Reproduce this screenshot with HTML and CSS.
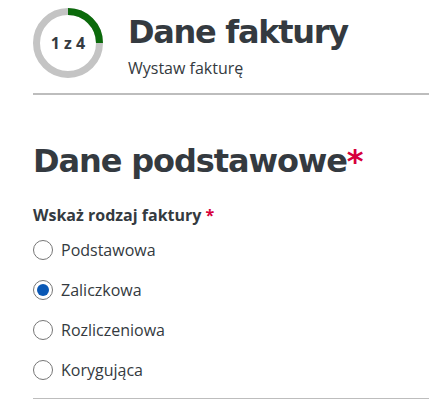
FILE: index.html
```html
<!DOCTYPE html>
<html lang="pl">
<head>
<meta charset="utf-8">
<link rel="stylesheet" href="styles.css">
</head>
<body>
<div class="page">
  <header class="head">
    <div class="ring">
      <svg width="70" height="70" viewBox="0 0 70 70">
        <circle cx="35" cy="35" r="31.5" fill="none" stroke="#c4c4c4" stroke-width="7"/>
        <path d="M35 3.5 A31.5 31.5 0 0 1 66.5 35" fill="none" stroke="#0b6a0b" stroke-width="7"/>
      </svg>
      <span class="ring-text">1 z 4</span>
    </div>
    <div class="titles">
      <h1 class="title">Dane faktury</h1>
      <p class="subtitle">Wystaw fakturę</p>
    </div>
  </header>
  <hr class="sep">
  <h2 class="section">Dane podstawowe<span class="req">*</span></h2>
  <div class="group" role="radiogroup">
    <div class="legend">Wskaż rodzaj faktury <span class="req">*</span></div>
    <label class="opt"><span class="radio"></span>Podstawowa</label>
    <label class="opt"><span class="radio checked"></span>Zaliczkowa</label>
    <label class="opt"><span class="radio"></span>Rozliczeniowa</label>
    <label class="opt"><span class="radio"></span>Korygująca</label>
  </div>
  <hr class="sep-thin">
</div>
</body>
</html>
```
FILE: styles.css
```css
* { box-sizing: border-box; }
html, body { margin: 0; padding: 0; background: #fff; }
body { font-family: "Open Sans", sans-serif; color: #343a40; }
.page { padding: 8px 0 0 33px; }
.head { display: flex; align-items: flex-start; }
.ring { position: relative; width: 70px; height: 70px; flex: none; }
.ring svg { display: block; }
.ring-text { position: absolute; inset: 0; display: flex; align-items: center; justify-content: center; font-weight: 700; font-size: 16px; color: #343a40; }
.titles { margin-left: 25px; }
.title { margin: 4px 0 0; font-family: "DejaVu Sans", sans-serif; font-weight: 700; font-size: 32px; line-height: 40px; color: #343a40; letter-spacing: -1.3px; }
.subtitle { margin: 6px 0 0; font-size: 16px; line-height: 20px; color: #343a40; }
.sep { margin: 15px 0 0; border: 0; height: 2px; background: #bdbdbd; }
.section { margin: 46px 0 0; font-family: "DejaVu Sans", sans-serif; font-weight: 700; font-size: 32px; line-height: 40px; color: #343a40; letter-spacing: -1.1px; }
.req { color: #d6003c; }
.group { margin: 23px 0 0; }
.legend { font-weight: 700; font-size: 16px; line-height: 22px; margin-bottom: 4px; }
.opt { display: flex; align-items: center; gap: 8px; height: 40px; font-size: 16px; color: #343a40; }
.radio { width: 20px; height: 20px; border: 1px solid #767676; border-radius: 50%; display: flex; align-items: center; justify-content: center; flex: none; }
.radio.checked::after { content: ""; width: 12px; height: 12px; border-radius: 50%; background: #0a58b5; }
.sep-thin { margin: 8px 0 0; border: 0; height: 1px; background: #bdbdbd; }
```
